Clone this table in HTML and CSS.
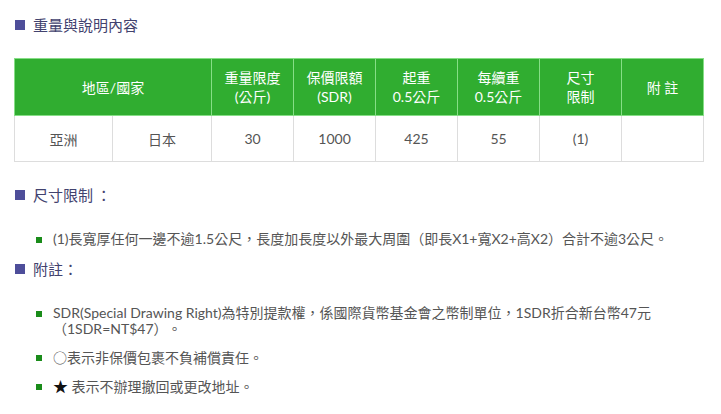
FILE: index.html
```html
<!DOCTYPE html>
<html lang="zh-Hant">
<head>
<meta charset="utf-8">
<title>重量與說明內容</title>
<link rel="stylesheet" href="styles.css">
</head>
<body>
<div class="page">
  <h2 class="title"><span class="sq"></span>重量與說明內容</h2>
  <table class="rates">
    <colgroup>
      <col class="c-wide"><col class="c-wide2"><col class="c"><col class="c"><col class="c"><col class="c"><col class="c"><col class="c">
    </colgroup>
    <thead>
      <tr>
        <th colspan="2">地區/國家</th>
        <th>重量限度<br>(公斤)</th>
        <th>保價限額<br>(SDR)</th>
        <th>起重<br>0.5公斤</th>
        <th>每續重<br>0.5公斤</th>
        <th>尺寸<br>限制</th>
        <th>附 註</th>
      </tr>
    </thead>
    <tbody>
      <tr>
        <td>亞洲</td>
        <td>日本</td>
        <td>30</td>
        <td>1000</td>
        <td>425</td>
        <td>55</td>
        <td>(1)</td>
        <td></td>
      </tr>
    </tbody>
  </table>

  <h2 class="title sec2"><span class="sq"></span>尺寸限制 ：</h2>
  <ul class="notes">
    <li>(1)長寬厚任何一邊不逾1.5公尺，長度加長度以外最大周圍（即長X1+寬X2+高X2）合計不逾3公尺。</li>
  </ul>

  <h2 class="title sec3"><span class="sq"></span>附註：</h2>
  <ul class="notes">
    <li>SDR(Special Drawing Right)為特別提款權，係國際貨幣基金會之幣制單位，1SDR折合新台幣47元<br>（1SDR=NT$47）。</li>
    <li><span class="circ">○</span>表示非保價包裹不負補償責任。</li>
    <li><span class="star">★</span> 表示不辦理撤回或更改地址。</li>
  </ul>
</div>
</body>
</html>
```

FILE: styles.css
```css
html, body {
  margin: 0;
  padding: 0;
  background: #ffffff;
}
body {
  font-family: Lato, "Noto Sans CJK TC", sans-serif;
  color: #555555;
  font-size: 14px;
  text-spacing-trim: space-all;
}
.page {
  padding: 15px 18px 0 14px;
}
.title {
  display: flex;
  align-items: center;
  margin: 0;
  font-family: "Noto Sans CJK TC", sans-serif;
  font-size: 15px;
  font-weight: normal;
  line-height: 20px;
  color: #42426e;
}
.sq {
  display: inline-block;
  width: 10px;
  height: 10px;
  background: #4e4e9a;
  margin: 0 8px 0 1px;
}
.rates {
  margin-top: 23px;
  width: 689px;
  border-collapse: collapse;
  table-layout: fixed;
}
.c-wide { width: 98px; }
.c-wide2 { width: 99px; }
.c { width: 82px; }
.rates th {
  background: #30ad30;
  color: #ffffff;
  font-weight: normal;
  font-size: 14px;
  line-height: 19px;
  height: 56px;
  padding: 0;
  border: 1px solid #86de86;
  text-align: center;
}
.rates td {
  height: 45px;
  padding: 0;
  border: 1px solid #dddddd;
  text-align: center;
  color: #555555;
  font-size: 14px;
}
.sec2 {
  margin-top: 23px;
}
.sec3 {
  margin-top: 8px;
}
.notes {
  list-style: none;
  margin: 26px 0 0 0;
  padding: 0 0 0 22px;
}
.notes li {
  position: relative;
  padding-left: 17px;
  line-height: 16px;
  margin-bottom: 12px;
  color: #555555;
}
.notes li::before {
  content: "";
  position: absolute;
  left: 0;
  top: 6px;
  width: 6px;
  height: 6px;
  background: #1a8c1a;
}
.circ {
  font-family: "Noto Sans CJK TC", sans-serif;
  font-size: 14px;
}
.star {
  font-family: "Noto Sans CJK TC", sans-serif;
  color: #111111;
  font-size: 15px;
}
```
